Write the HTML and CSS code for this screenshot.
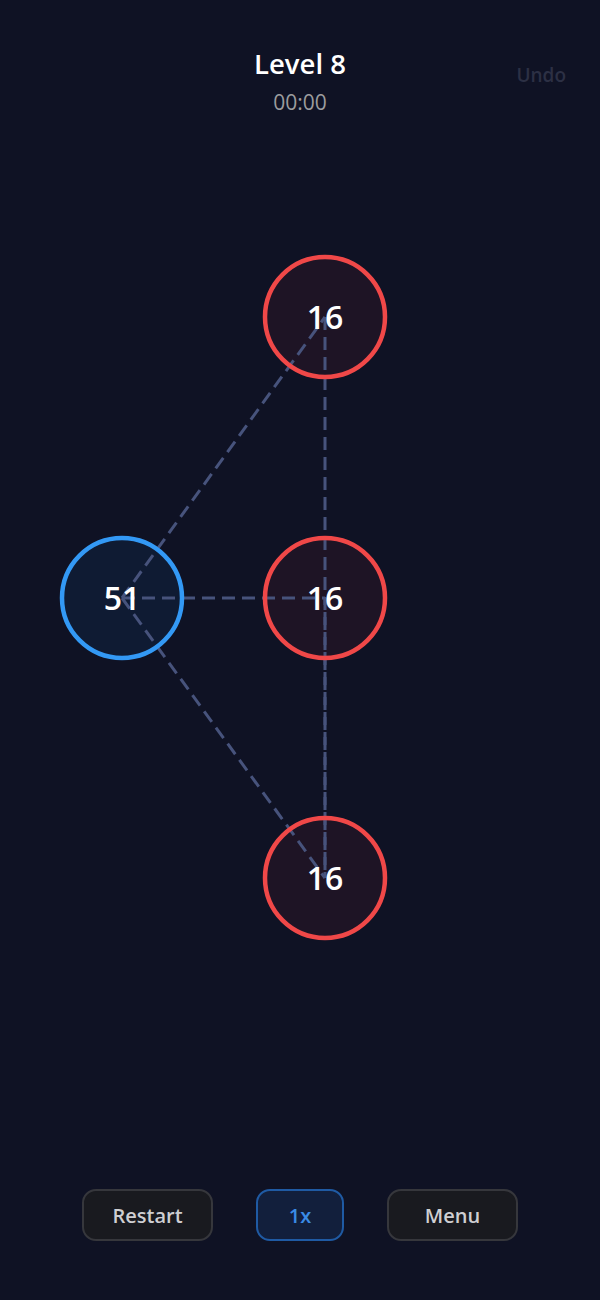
FILE: index.html
```html
<!DOCTYPE html>
<html>
<head>
<meta charset="utf-8">
<link rel="stylesheet" href="styles.css">
</head>
<body>
<div class="page">
  <header class="header">
    <div class="spacer"></div>
    <div class="title-block">
      <div class="title">Level 8</div>
      <div class="time">00:00</div>
    </div>
    <div class="undo">Undo</div>
  </header>
  <svg class="board" width="600" height="1050" viewBox="0 114 600 1050">
    <g class="fills">
      <circle cx="122" cy="598" r="60" class="fill-blue"/>
      <circle cx="325" cy="317" r="60" class="fill-red"/>
      <circle cx="325" cy="598" r="60" class="fill-red"/>
      <circle cx="325" cy="878" r="60" class="fill-red"/>
    </g>
    <g class="edges">
      <line x1="122" y1="598" x2="325" y2="317"/>
      <line x1="122" y1="598" x2="325" y2="598"/>
      <line x1="122" y1="598" x2="325" y2="878"/>
      <line x1="325" y1="317" x2="325" y2="878"/>
      <line class="shifted" x1="325" y1="598" x2="325" y2="878"/>
    </g>
    <g class="rings">
      <circle cx="122" cy="598" r="60" class="ring-blue"/>
      <circle cx="325" cy="317" r="60" class="ring-red"/>
      <circle cx="325" cy="598" r="60" class="ring-red"/>
      <circle cx="325" cy="878" r="60" class="ring-red"/>
    </g>
    <g class="labels">
      <text x="122" y="610">51</text>
      <text x="325" y="329">16</text>
      <text x="325" y="610">16</text>
      <text x="325" y="890">16</text>
    </g>
  </svg>
  <footer class="footer">
    <button class="btn btn-wide">Restart</button>
    <button class="btn btn-speed">1x</button>
    <button class="btn btn-wide">Menu</button>
  </footer>
</div>
</body>
</html>
```

FILE: styles.css
```css
html, body {
  margin: 0;
  padding: 0;
  background: #0f1224;
}
body {
  font-family: "Open Sans", "Noto Sans", sans-serif;
  color: #ffffff;
}
.page {
  width: 600px;
  height: 1300px;
  display: flex;
  flex-direction: column;
  background: #0f1224;
}
.header {
  display: grid;
  grid-template-columns: 1fr auto 1fr;
  padding-top: 48px;
  height: 66px;
}
.title-block {
  display: flex;
  flex-direction: column;
  align-items: center;
}
.title {
  font-size: 27.5px;
  font-weight: 600;
  line-height: 32px;
  color: #ffffff;
}
.time {
  margin-top: 10px;
  font-size: 21px;
  line-height: 24px;
  color: #9c9c9e;
}
.undo {
  justify-self: end;
  margin-top: 15px;
  margin-right: 34px;
  font-size: 19px;
  line-height: 24px;
  font-weight: 600;
  color: #2c3044;
}
.board {
  display: block;
}
.fill-blue { fill: #0f1b33; }
.fill-red { fill: #1e1425; }
.edges line {
  stroke: #47537c;
  stroke-width: 3;
  stroke-dasharray: 13 7;
}
.edges line.shifted {
  stroke-dashoffset: 6;
}
.rings circle {
  fill: none;
  stroke-width: 4.5;
}
.ring-blue { stroke: #3399f5; }
.ring-red { stroke: #f04848; }
.labels text {
  font-family: "Open Sans", "Noto Sans", sans-serif;
  font-size: 32px;
  font-weight: 600;
  fill: #ffffff;
  text-anchor: middle;
}
.footer {
  display: flex;
  justify-content: center;
  gap: 43px;
  margin-top: 25px;
}
.btn {
  height: 52px;
  border-radius: 14px;
  font-family: "Open Sans", "Noto Sans", sans-serif;
  font-size: 20px;
  font-weight: 600;
  padding: 0;
}
.btn-wide {
  width: 131px;
  background: #191a1f;
  border: 2px solid #36373c;
  color: #cfcfd2;
}
.btn-speed {
  width: 88px;
  background: #121f3c;
  border: 2px solid #1f5aa3;
  color: #3a8be6;
}
```
